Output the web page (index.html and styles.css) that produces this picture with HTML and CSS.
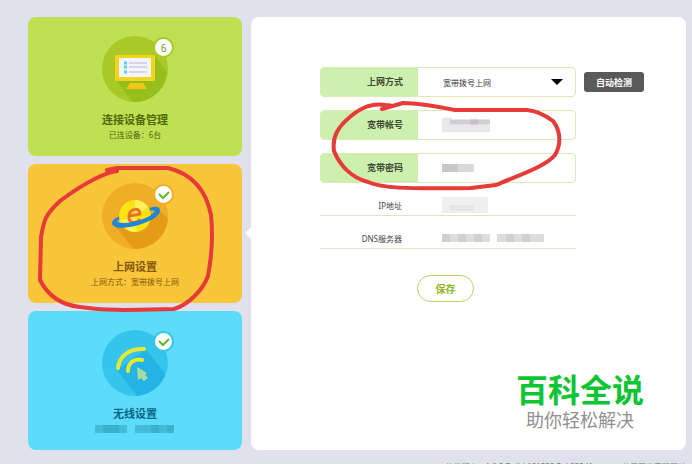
FILE: index.html
```html
<!DOCTYPE html>
<html lang="zh-CN">
<head>
  <meta charset="UTF-8">
  <meta name="viewport" content="width=device-width, initial-scale=1">
  <title>上网设置</title>
  <link rel="stylesheet" href="styles.css">
</head>
<body>
  <div class="main">
    <nav class="menu">
      <a class="card green" href="#devices">
        <span class="icon">
          <svg viewBox="0 0 66 66">
            <circle class="disc" cx="33" cy="33" r="33"/>
            <path class="shade" d="M53 19L65 37A33 33 0 0 1 31 66L14 45Z"/>
            <path fill="#f0c818" d="M28 47h13l4 6H24z"/>
            <rect x="13" y="19" width="40" height="26" rx="1" fill="#f3d41c"/>
            <rect x="17" y="22" width="32" height="19" fill="#f3f5fc"/>
            <path stroke="#d5d4ea" stroke-width="2" d="M27 27h18M27 31h18M27 36h18"/>
            <path stroke="#5fcfea" stroke-width="3" d="M22 27h3M22 31h3M22 36h3"/>
          </svg>
          <span class="badge">6</span>
        </span>
        <span class="title">连接设备管理</span>
        <span class="note">已连设备：6台</span>
      </a>
      <a class="card orange" href="#network">
        <span class="icon">
          <svg viewBox="0 0 66 66">
            <circle class="disc" cx="33" cy="33" r="33"/>
            <path class="shade" d="M57 27L66 36A33 33 0 0 1 32 66L13 43Z"/>
            <path fill="#1c86d8" d="M18 33C8 37 8 42 14 44 24 47 58 37 58 28 58 23 54 23 47 25L48 28C52 27 54 28 52 30 46 36 26 41 17 40 14 39 15 37 19 36Z"/>
            <circle cx="33" cy="33" r="16" fill="#ffe214"/>
            <path fill="#fff05c" d="M33 17a16 16 0 0 1 13 7L33 33zM18 38l15-5 2 16a16 16 0 0 1-17-11z"/>
            <path fill="none" stroke="#e8742c" stroke-width="3" d="M28 33l10-2c0-7-10-6-11 2-1 8 8 8 11 3"/>
            <path fill="#1c86d8" d="M14 39C26 42 44 37 53 29L55 33C46 41 24 47 13 44Z"/>
          </svg>
          <span class="badge"><svg class="tick" viewBox="0 0 12 12"><path d="M1 5l4 4 6-6"/></svg></span>
        </span>
        <span class="title">上网设置</span>
        <span class="note">上网方式：宽带拨号上网</span>
      </a>
      <a class="card blue" href="#wireless">
        <span class="icon">
          <svg viewBox="0 0 66 66">
            <circle class="disc" cx="33" cy="33" r="33"/>
            <path class="shade" d="M44 19L63 44A33 33 0 0 1 35 66L15 40Z"/>
            <path fill="none" stroke="#e6e832" stroke-width="4" stroke-linecap="round" d="M16 38C17 26 28 18 42 19M26 41C26 33 32 28 40 30"/>
            <path fill="#a4dea0" d="M35 37l10 6-2 2 3 3-4 3-3-3-3 2z"/>
          </svg>
          <span class="badge"><svg class="tick" viewBox="0 0 12 12"><path d="M1 5l4 4 6-6"/></svg></span>
        </span>
        <span class="title">无线设置</span>
        <svg class="mosaic" width="80" height="8" viewBox="0 0 80 8">
          <path fill="#43bcd8" d="M0 0h32v8H0zM40 0h39v8H40z"/>
          <path fill="#38b0ce" d="M8 0h16v8H8zM56 0h8v8h-8zM72 0h7v8h-7z"/>
        </svg>
      </a>
    </nav>

    <main class="panel">
      <form class="form">
        <div class="row">
          <div class="field">
            <label for="mode">上网方式</label>
            <select id="mode">
              <option>宽带拨号上网</option>
            </select>
            <svg class="arrow" viewBox="0 0 12 6"><path d="M0 0h12L6 6z"/></svg>
          </div>
          <button class="detect" type="button">自动检测</button>
        </div>
        <div class="field">
          <label for="account">宽带帐号</label>
          <input id="account" type="text">
          <svg class="mosaic over" width="48" height="15" viewBox="0 0 48 15">
            <path fill="#e9e8ea" d="M0 0h10v15H0zM10 7h14v8H10zM24 7h24v8H24z"/>
            <path fill="#d2cdd3" d="M8 2h40v5H8z"/>
            <path fill="#c6c1c9" d="M28 2h8v5h-8z"/>
          </svg>
        </div>
        <div class="field">
          <label for="password">宽带密码</label>
          <input id="password" type="password">
          <svg class="mosaic over" width="32" height="8" viewBox="0 0 32 8">
            <path fill="#d9d9d9" d="M0 0h32v8H0z"/>
            <path fill="#c8c8c8" d="M0 0h16v8H0z"/>
          </svg>
        </div>
        <dl class="info">
          <div class="line">
            <dt>IP地址</dt>
            <dd>
              <svg class="mosaic" width="48" height="16" viewBox="0 0 48 16">
                <path fill="#f0f0f1" d="M0 0h46v16H0z"/>
                <path fill="#e6e6e7" d="M8 8h24v6H8z"/>
              </svg>
            </dd>
          </div>
          <div class="line">
            <dt>DNS服务器</dt>
            <dd>
              <svg class="mosaic" width="104" height="8" viewBox="0 0 104 8">
                <path fill="#dcdcdc" d="M0 0h48v8H0zM55 0h47v8H55z"/>
                <path fill="#d0d0d0" d="M0 0h8v8H0zM16 0h8v8h-8zM32 0h8v8h-8zM64 0h8v8h-8zM80 0h8v8h-8z"/>
              </svg>
            </dd>
          </div>
        </dl>
        <button class="save" type="submit">保存</button>
      </form>
      <div class="brand">
        <strong>百科全说</strong>
        <span>助你轻松解决</span>
      </div>
    </main>
  </div>

  <footer class="footer">
    <span>软件版本：1.0.2 Build 161228 Rel.33941n</span>
    <span>使用网络客服网站</span>
  </footer>

  <!-- hand-drawn marks over the page -->
  <svg class="marks" width="692" height="464" viewBox="0 0 692 464">
    <path d="M117 171C108 172 88 180 60 201C45 215 44 220 41 237L40 280C48 296 62 305 80 307C106 311 130 310 174 309C188 305 203 290 208 276C211 260 213 235 211 215C206 190 193 174 168 168L117 168L107 170"/>
    <path d="M382 109C390 105 395 106 386 105C372 103 362 107 351 116C338 127 332 136 334 151C340 166 352 178 368 182C382 188 402 189 471 188L496 185C522 174 546 166 555 155C562 143 560 130 553 121C545 115 538 111 527 110H455C440 107 420 103 403 103L382 109"/>
  </svg>
</body>
</html>
```
FILE: styles.css
```css
* { box-sizing: border-box; }
body { margin: 0; height: 100vh; overflow: hidden; background: #e0e1ed; color: #444;
       font-family: "Noto Sans", "Noto Sans CJK SC", sans-serif; font-size: 8px; }
svg { display: block; }
button, input, select { font-family: inherit; }

.main { display: flex; gap: 9px; padding: 17px 6px 0 28px; }

/* left menu */
.menu { display: flex; flex-direction: column; gap: 8px; width: 214px; flex: none; }
.card { display: flex; flex-direction: column; align-items: center; padding: 19px 0 14px;
        border-radius: 8px; text-decoration: none; }
.icon { position: relative; width: 66px; height: 66px; }
.badge { position: absolute; top: 1px; right: -6px; width: 21px; height: 21px;
         display: flex; align-items: center; justify-content: center;
         border: 2px solid; border-radius: 50%; background: #fff; font-size: 10px; }
.tick { width: 12px; height: 12px; fill: none; stroke: #60b92c; stroke-width: 2; }
.title { margin-top: 10px; font-size: 11px; font-weight: bold; line-height: 16px; }
.note { font-size: 8px; line-height: 14px; }
.card .mosaic { margin: 3px 0; }

.green { background: #bfe053; color: #4f6a08; }
.green .disc { fill: #a9ca26; }
.green .shade { fill: #96bf1e; }
.green .badge { border-color: #a9ca26; color: #60a92c; }
.orange { background: #f9c63a; color: #84570a; }
.orange .disc { fill: #f0ad27; }
.orange .shade { fill: #e69b18; }
.orange .badge { border-color: #f0ad27; }
.blue { background: #5bdcfb; color: #0b6683; }
.blue .disc { fill: #35c5ec; }
.blue .shade { fill: #25b3e5; }
.blue .badge { border-color: #35c5ec; }

/* right panel */
.panel { position: relative; flex: 1; padding: 50px 42px 18px 69px; border-radius: 8px;
         background: #fff; display: flex; flex-direction: column; justify-content: space-between; }
.panel::before { content: ""; position: absolute; left: -6px; top: 210px;
                 border: 6px solid transparent; border-left: 0; border-right-color: #fff; }
.form { display: flex; flex-direction: column; gap: 13px; }
.row { display: flex; align-items: center; gap: 8px; }
.field { position: relative; display: flex; width: 256px; height: 30px; overflow: hidden;
         border: 1px solid #dce9b4; border-radius: 4px; }
.field label { width: 97px; padding-right: 15px; background: #cdf0af; color: #3d4a35;
               font-size: 9px; font-weight: bold; line-height: 28px; text-align: right; }
.field input, .field select { flex: 1; min-width: 0; padding: 0 25px; border: 0; outline: 0;
                              background: none; color: #333; font-size: 8px; appearance: none; }
.arrow { position: absolute; right: 12px; top: 11px; width: 12px; height: 6px; pointer-events: none; }
.over { position: absolute; left: 121px; top: 50%; transform: translateY(-50%); pointer-events: none; }
.detect { width: 60px; height: 20px; padding: 0; border: 0; border-radius: 3px;
          background: #5a5a5a; color: #fff; font-size: 9px; font-weight: bold; }

.info { width: 256px; margin: -13px 0 0; }
.line { display: flex; align-items: center; height: 33px; padding-top: 12px;
        border-bottom: 1px solid #dfe3cd; }
.line dt { width: 82px; text-align: right; }
.line dd { margin: 0 0 0 40px; }
.save { width: 57px; height: 27px; margin: 13px 0 0 97px; padding: 0;
        border: 1px solid #b6d36a; border-radius: 14px; background: #fff;
        color: #8fb81e; font-size: 10px; font-weight: bold; }

.brand { align-self: flex-end; display: flex; flex-direction: column; align-items: center; }
.brand strong { color: #10c534; font-size: 32px; font-weight: bold; line-height: 36px; }
.brand span { color: #909090; font-size: 18px; line-height: 24px; }

.footer { display: flex; justify-content: flex-end; gap: 24px; padding: 11px 6px 0 0;
          color: #777; font-size: 8px; line-height: 12px; white-space: nowrap; }

.marks { position: absolute; left: 0; top: 0; fill: none; stroke: #e63b38; stroke-width: 4;
         stroke-linecap: round; stroke-linejoin: round; pointer-events: none; }
```
